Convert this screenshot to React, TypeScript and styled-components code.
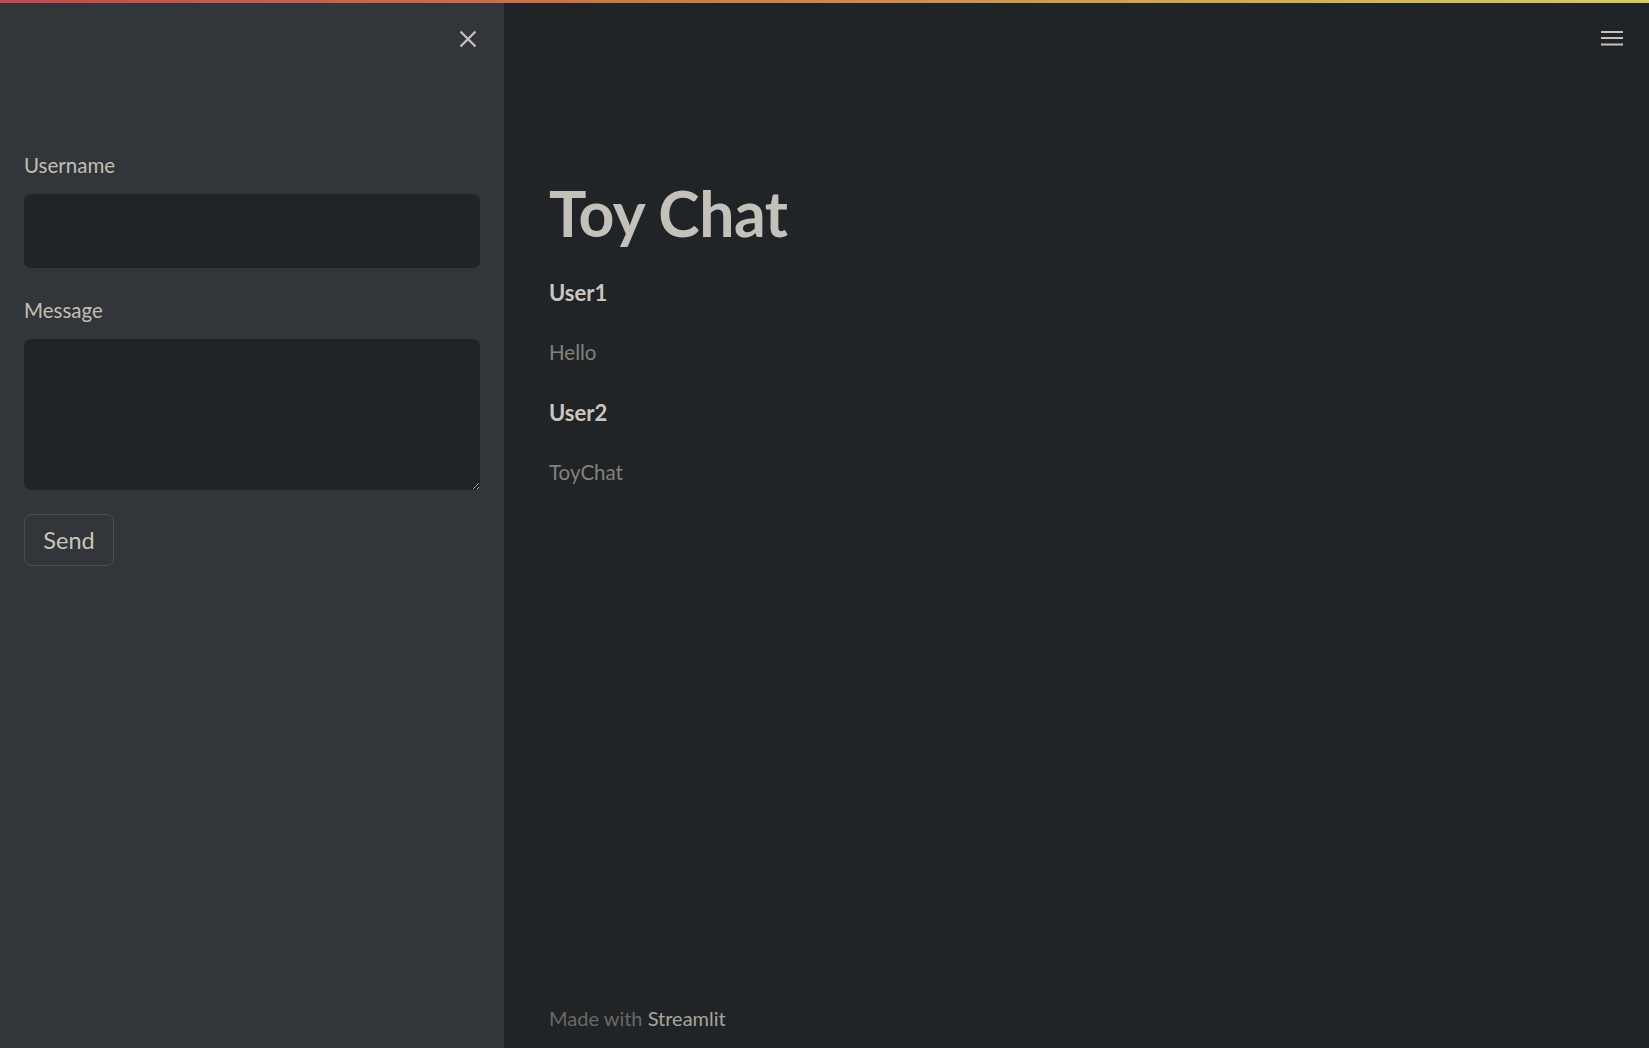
import React from "react";
import styled, { createGlobalStyle } from "styled-components";

const GlobalStyle = createGlobalStyle`
  html, body { margin: 0; padding: 0; background: #212427; }
  body { font-family: Lato, "Noto Sans", sans-serif; overflow: hidden; }
  * { box-sizing: border-box; }
`;

const Page = styled.div`
  display: flex;
  flex-direction: column;
  width: 100vw;
  height: 100vh;
`;

const Decoration = styled.div`
  height: 3px;
  flex: none;
  background: linear-gradient(90deg, #c9464d 0%, #d3803f 45%, #d5cf57 100%);
`;

const Body = styled.div`
  flex: 1;
  display: flex;
  min-height: 0;
`;

const Sidebar = styled.aside`
  width: 504px;
  flex: none;
  background: #323539;
  padding: 0 24px;
  display: flex;
  flex-direction: column;
`;

const SidebarHeader = styled.div`
  height: 148px;
  display: flex;
  justify-content: flex-end;
  align-items: flex-start;
  padding-top: 24px;
  padding-right: 0;
`;

const IconButton = styled.button`
  width: 24px;
  height: 24px;
  padding: 0;
  border: none;
  background: transparent;
  display: flex;
  align-items: center;
  justify-content: center;
  color: #c7c3bc;
  cursor: pointer;
`;

const Field = styled.div<{ $gap: number }>`
  display: flex;
  flex-direction: column;
  margin-bottom: ${(p) => p.$gap}px;
`;

const Label = styled.label`
  font-size: 20.5px;
  color: #c3beb7;
  line-height: 28px;
  margin-bottom: 15px;
`;

const TextInput = styled.input`
  height: 74px;
  width: 100%;
  background: #212427;
  border: none;
  border-radius: 7px;
  outline: none;
  color: #c3beb7;
  font-family: inherit;
  font-size: 20px;
  padding: 0 16px;
`;

const TextArea = styled.textarea`
  height: 151px;
  width: 100%;
  background: #212427;
  border: none;
  border-radius: 7px;
  outline: none;
  color: #c3beb7;
  font-family: inherit;
  font-size: 20px;
  padding: 16px;
  resize: vertical;
`;

const SendButton = styled.button`
  align-self: flex-start;
  width: 90px;
  height: 52px;
  background: transparent;
  border: 1px solid #4b4f54;
  border-radius: 7px;
  color: #c9c5be;
  font-family: Lato, "Noto Sans", sans-serif;
  font-size: 23.5px;
  padding: 0;
`;

const Main = styled.main`
  flex: 1;
  display: flex;
  flex-direction: column;
  background: #212427;
  padding: 0 24px 0 45px;
`;

const MainHeader = styled.div`
  height: 172px;
  display: flex;
  justify-content: flex-end;
  align-items: flex-start;
  padding-top: 22px;
`;

const MenuButton = styled(IconButton)`
  width: 26px;
  height: 26px;
`;

const Content = styled.div`
  flex: 1;
  display: flex;
  flex-direction: column;
`;

const Title = styled.h1`
  margin: 0 0 26px 0;
  font-family: Lato, "Noto Sans", sans-serif;
  font-weight: 700;
  font-size: 62.5px;
  line-height: 76px;
  color: #c4c0ba;
  letter-spacing: -0.5px;
`;

const UserName = styled.h3`
  margin: 0 0 28px 0;
  font-size: 22px;
  font-weight: 700;
  line-height: 32px;
  color: #cbc7c0;
`;

const MessageText = styled.p`
  margin: 0 0 30px 0;
  font-size: 20.5px;
  line-height: 30px;
  color: #84817b;
`;

const Footer = styled.footer`
  height: 52px;
  font-size: 20px;
  color: #6b6964;
  padding-top: 10px;
`;

const FooterLink = styled.span`
  color: #a8a49e;
`;

const CloseIcon = () => (
  <svg width="20" height="20" viewBox="0 0 20 20" fill="none">
    <path d="M2.5 2.5 L17.5 17.5 M17.5 2.5 L2.5 17.5" stroke="currentColor" strokeWidth="2.2" />
  </svg>
);

const MenuIcon = () => (
  <svg width="24" height="20" viewBox="0 0 24 20" fill="none">
    <path d="M1 4 H23 M1 10 H23 M1 16.5 H23" stroke="currentColor" strokeWidth="2" />
  </svg>
);

const messages = [
  { user: "User1", text: "Hello" },
  { user: "User2", text: "ToyChat" },
];

export default function App() {
  return (
    <Page>
      <GlobalStyle />
      <Decoration />
      <Body>
        <Sidebar>
          <SidebarHeader>
            <IconButton aria-label="Close sidebar">
              <CloseIcon />
            </IconButton>
          </SidebarHeader>
          <Field $gap={28}>
            <Label>Username</Label>
            <TextInput />
          </Field>
          <Field $gap={24}>
            <Label>Message</Label>
            <TextArea />
          </Field>
          <SendButton>Send</SendButton>
        </Sidebar>
        <Main>
          <MainHeader>
            <MenuButton aria-label="Menu">
              <MenuIcon />
            </MenuButton>
          </MainHeader>
          <Content>
            <Title>Toy Chat</Title>
            {messages.map((m) => (
              <React.Fragment key={m.user}>
                <UserName>{m.user}</UserName>
                <MessageText>{m.text}</MessageText>
              </React.Fragment>
            ))}
          </Content>
          <Footer>
            Made with <FooterLink>Streamlit</FooterLink>
          </Footer>
        </Main>
      </Body>
    </Page>
  );
}
